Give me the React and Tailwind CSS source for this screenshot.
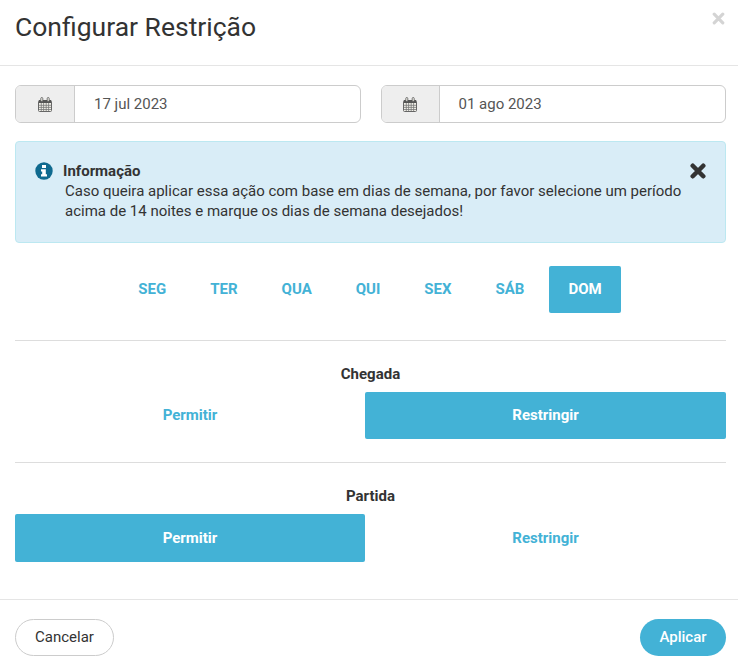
import React from "react";

const Cal = () => (
  <svg width="14" height="15" viewBox="0 0 14 15" className="block" fill="none">
    <rect x="0.5" y="3.5" width="13" height="11" rx="1" fill="#f0efe8" stroke="#666" />
    <rect x="1" y="3" width="12" height="3" fill="#555" />
    <path d="M1 8.3H13M1 10.4H13M1 12.5H13M3.3 6V14M5.6 6V14M8.2 6V14M10.6 6V14" stroke="#777" strokeWidth="0.8" />
    <rect x="2.8" y="0.5" width="2" height="4" rx="1" fill="#f0efe8" stroke="#555" strokeWidth="0.8" />
    <rect x="9.2" y="0.5" width="2" height="4" rx="1" fill="#f0efe8" stroke="#555" strokeWidth="0.8" />
  </svg>
);

const Info = () => (
  <svg width="18" height="18" viewBox="0 0 18 18" className="block shrink-0">
    <circle cx="9" cy="9" r="8.7" fill="#0f6a8f" />
    <rect x="7" y="3" width="4" height="3" fill="#fff" />
    <path d="M6 7.2H10.8V12.2H12V14.6H6V12.2H7.2V9.6H6Z" fill="#fff" />
  </svg>
);

const Cross = ({ className, size, stroke }) => (
  <svg width={size} height={size} viewBox="0 0 14 14" className={className} fill="none">
    <path d="M2.4 2.4L11.6 11.6M11.6 2.4L2.4 11.6" stroke="currentColor" strokeWidth={stroke} strokeLinecap="round" />
  </svg>
);

const DateInput = ({ value, addon }) => (
  <div className="flex h-[38px] flex-1 overflow-hidden rounded-[6px] border border-[#ccc] bg-white">
    <div className={`flex items-center justify-center border-r border-[#ccc] bg-[#eee] ${addon}`}>
      <Cal />
    </div>
    <div className="flex items-center pl-[19px] text-[15px] text-[#555]">{value}</div>
  </div>
);

const Day = ({ label, active }) => (
  <div className={`flex h-[47px] items-center justify-center rounded-[2px] px-[19px] text-[15px] font-bold ${active ? "bg-[#43b2d6] text-white" : "text-[#43b2d6]"}`}>
    {label}
  </div>
);

const Toggle = ({ label, active, className }) => (
  <div className={`flex items-center justify-center rounded-[2px] text-[15px] font-bold ${active ? "bg-[#43b2d6] text-white" : "text-[#43b2d6]"} ${className}`}>
    {label}
  </div>
);

export default function App() {
  return (
    <div className="relative h-[670px] w-[738px] overflow-hidden bg-white text-[#333]" style={{ fontFamily: "Roboto, sans-serif" }}>
      <div className="flex h-[66px] items-start border-b border-[#e5e5e5] pt-[11px] pl-[15px]">
        <h4 className="text-[26.5px] leading-[32px] font-normal text-[#333]">Configurar Restrição</h4>
      </div>
      <Cross size={13} stroke={3.4} className="absolute top-[12px] right-[13px] block text-[#d4d4d4]" />

      <div className="pt-[19px] pr-[12px] pl-[15px]">
        <div className="flex gap-[20px]">
          <DateInput value="17 jul 2023" addon="w-[59px]" />
          <DateInput value="01 ago 2023" addon="w-[58px]" />
        </div>

        <div className="relative mt-[18px] h-[102px] rounded-[4px] border border-[#bce8f1] bg-[#d9edf7] pt-[20px] pl-[19px]">
          <div className="flex items-center gap-[10px]">
            <Info />
            <span className="text-[15px] leading-[18px] font-bold text-[#333]">Informação</span>
          </div>
          <p className="mt-[1px] ml-[30px] w-[640px] text-[15px] leading-[20px] text-[#333]">
            Caso queira aplicar essa ação com base em dias de semana, por favor selecione um período acima de 14 noites e marque os dias de semana desejados!
          </p>
          <Cross size={16} stroke={4} className="absolute top-[21px] right-[19px] block text-[#333]" />
        </div>

        <div className="mt-[23px] flex justify-center gap-[6px] pr-[1px]">
          {["SEG", "TER", "QUA", "QUI", "SEX", "SÁB"].map((d) => (
            <Day key={d} label={d} />
          ))}
          <Day label="DOM" active />
        </div>

        <div className="mt-[27px] border-t border-[#ddd]" />

        <div className="mt-[23px] text-center text-[15px] leading-[20px] font-bold">Chegada</div>
        <div className="mt-[8px] flex">
          <Toggle label="Permitir" className="h-[47px] w-[350px]" />
          <Toggle label="Restringir" active className="h-[47px] flex-1" />
        </div>

        <div className="mt-[23px] border-t border-[#ddd]" />

        <div className="mt-[23px] text-center text-[15px] leading-[20px] font-bold">Partida</div>
        <div className="mt-[8px] flex">
          <Toggle label="Permitir" active className="h-[48px] w-[350px]" />
          <Toggle label="Restringir" className="h-[48px] flex-1" />
        </div>
      </div>

      <div className="mt-[37px] flex items-center justify-between border-t border-[#e5e5e5] pt-[19px] pr-[12px] pl-[15px]">
        <div className="flex h-[37px] w-[99px] items-center justify-center rounded-full border border-[#ccc] bg-white text-[15px] text-[#333]">Cancelar</div>
        <div className="flex h-[37px] w-[86px] items-center justify-center rounded-full bg-[#43b2d6] text-[15px] font-medium text-white">Aplicar</div>
      </div>
    </div>
  );
}
